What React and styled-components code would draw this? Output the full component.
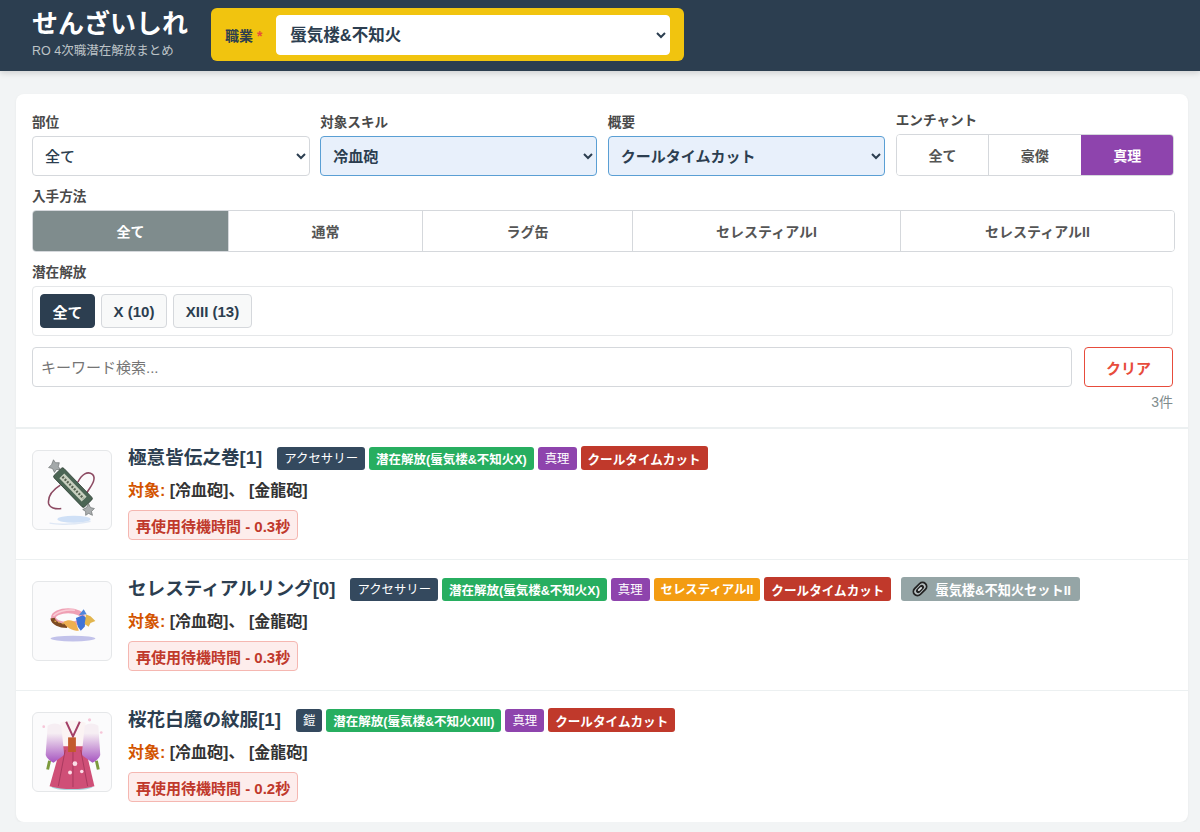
import React from 'react';
import styled, { createGlobalStyle } from 'styled-components';

const GlobalStyle = createGlobalStyle`
  * { box-sizing: border-box; }
  html, body { margin: 0; padding: 0; }
  body {
    background: #f2f4f5;
    color: #2c3e50;
    font-family: "Liberation Sans", "Noto Sans CJK JP", sans-serif;
  }
`;

const Header = styled.header`
  display: flex;
  align-items: center;
  gap: 23px;
  height: 71px;
  padding: 0 32px 2px;
  background: #2c3e50;
  box-shadow: 0 2px 6px rgba(0, 0, 0, 0.15);
`;

const Brand = styled.div`
  display: flex;
  flex-direction: column;
  gap: 6px;
  width: 156px;
`;

const Title = styled.h1`
  margin: 0;
  font-size: 26px;
  line-height: 28px;
  font-weight: 700;
  color: #fff;
  white-space: nowrap;
`;

const Subtitle = styled.div`
  font-size: 12.5px;
  line-height: 15px;
  color: #bdc3c7;
  white-space: nowrap;
`;

const JobBox = styled.div`
  display: flex;
  align-items: center;
  gap: 14px;
  width: 473px;
  height: 53px;
  padding: 0 14px;
  background: #f1c40f;
  border-radius: 6px;
`;

const JobLabel = styled.label`
  font-size: 14px;
  font-weight: 700;
  color: #2c3e50;
  white-space: nowrap;
`;

const Star = styled.span`
  color: #e74c3c;
`;

const Select = styled.select`
  display: block;
  width: 100%;
  height: 40px;
  padding: 0 8px;
  font: inherit;
  font-size: 15px;
  font-weight: ${({ $active }) => ($active ? 700 : 500)};
  color: #2c3e50;
  background-color: ${({ $active }) => ($active ? '#e8f0fb' : '#fff')};
  border: 1px solid ${({ $active }) => ($active ? '#5a9fd4' : '#d5d8dc')};
  border-radius: 4px;
`;

const JobSelect = styled(Select)`
  flex: 1;
  min-width: 0;
  padding: 0 9px;
  border-color: #fff;
  font-size: 16.5px;
  font-weight: 700;
`;

const Main = styled.main`
  margin: 23px 12px 0 16px;
  background: #fff;
  border-radius: 8px;
  box-shadow: 0 1px 3px rgba(0, 0, 0, 0.05);
`;

const Filters = styled.section`
  display: flex;
  flex-direction: column;
  padding: 18px 13px 16px 16px;
  border-bottom: 2px solid #ecf0f1;
`;

const TopRow = styled.div`
  display: grid;
  grid-template-columns: 277.5px 277px 277.3px 278.2px;
  gap: 10.67px;
  align-items: end;
`;

const Field = styled.div`
  display: flex;
  flex-direction: column;
  margin-top: ${({ $top }) => $top || 0}px;
`;

const FieldLabel = styled.div`
  font-size: 13.6px;
  line-height: 18px;
  font-weight: 700;
  color: #4a4a4a;
  margin-bottom: 4px;
`;

const Segmented = styled.div`
  display: flex;
  height: ${({ $h }) => $h}px;
  border: 1px solid #d5d8dc;
  border-radius: 4px;
  overflow: hidden;
`;

const Segment = styled.button`
  flex: ${({ $w }) => ($w ? `0 0 ${$w}px` : '1')};
  min-width: 0;
  padding: 0;
  border: 0;
  border-left: 1px solid ${({ $on }) => ($on ? 'transparent' : '#d5d8dc')};
  &:first-child { border-left: 0; }
  background: ${({ $on }) => $on || '#fff'};
  color: ${({ $on }) => ($on ? '#fff' : '#555')};
  font: inherit;
  font-size: 14px;
  font-weight: 700;
`;

const TierBox = styled.div`
  display: flex;
  gap: 6px;
  height: 50px;
  margin-right: 2px;
  padding: 7px;
  border: 1px solid #e5e7e9;
  border-radius: 4px;
`;

const TierButton = styled.button`
  height: 34px;
  width: ${({ $w }) => $w}px;
  padding: 0;
  font: inherit;
  font-size: 15px;
  font-weight: 700;
  color: ${({ $on }) => ($on ? '#fff' : '#2c3e50')};
  background: ${({ $on }) => ($on ? '#2c3e50' : '#f8f9f9')};
  border: 1px solid ${({ $on }) => ($on ? '#2c3e50' : '#d5d8dc')};
  border-radius: 4px;
`;

const SearchRow = styled.div`
  display: flex;
  gap: 12px;
  margin: 11px 2px 0 0;
`;

const SearchInput = styled.input`
  flex: 1;
  height: 40px;
  padding: 0 8px;
  font: inherit;
  font-size: 15px;
  color: #2c3e50;
  border: 1px solid #d5d8dc;
  border-radius: 4px;
  &::placeholder { color: #757575; }
`;

const ClearButton = styled.button`
  width: 89px;
  height: 40px;
  padding: 0;
  font: inherit;
  font-size: 15px;
  font-weight: 700;
  color: #e74c3c;
  background: #fff;
  border: 1px solid #e74c3c;
  border-radius: 4px;
`;

const Count = styled.div`
  margin: 6px 2px 0 0;
  text-align: right;
  font-size: 14px;
  line-height: 18px;
  color: #7f8c8d;
`;

const Item = styled.article`
  display: flex;
  gap: 16px;
  height: 131px;
  padding: 17px 16px 0;
  border-bottom: ${({ $last }) => ($last ? '0' : '1px solid #ecf0f1')};
`;

const Thumb = styled.div`
  flex: none;
  width: 80px;
  height: 80px;
  margin-top: 4px;
  display: flex;
  align-items: center;
  justify-content: center;
  background: #fbfbfc;
  border: 1px solid #e5e7e9;
  border-radius: 6px;
`;

const Body = styled.div`
  display: flex;
  flex-direction: column;
  align-items: flex-start;
`;

const TitleRow = styled.div`
  display: flex;
  align-items: center;
  gap: 4px;
  height: 24px;
`;

const ItemName = styled.h2`
  margin: 0 11px 0 0;
  font-size: 18.6px;
  line-height: 24px;
  font-weight: 700;
  color: #2c3e50;
  white-space: nowrap;
`;

const Badge = styled.span`
  display: inline-flex;
  align-items: center;
  height: 23px;
  padding: 0 7px;
  font-size: 12.4px;
  font-weight: ${({ $plain }) => ($plain ? 400 : 700)};
  color: #fff;
  background: ${({ $bg }) => $bg};
  border-radius: 3px;
  white-space: nowrap;
`;

const TierBadge = styled(Badge)`
  font-size: 12.5px;
`;

const SummaryBadge = styled(Badge)`
  height: 24px;
  font-size: 12.6px;
`;

const SetBadge = styled(Badge)`
  gap: 6px;
  height: 24px;
  margin-left: 6px;
  padding: 0 9px 0 10px;
  font-size: 13.2px;
  background: #95a5a6;
`;

const Target = styled.div`
  margin-top: 9px;
  font-size: 16px;
  line-height: 24px;
  font-weight: 700;
  color: #333;
`;

const TargetLabel = styled.span`
  color: #d35400;
`;

const Effect = styled.div`
  margin-top: 7px;
  padding: 0 7px;
  height: 30px;
  display: flex;
  align-items: center;
  font-size: 15px;
  font-weight: 700;
  color: #c0392b;
  background: #fdedec;
  border: 1px solid #f5b7b1;
  border-radius: 4px;
`;

const ScrollIcon = () => (
  <svg width="78" height="78" viewBox="0 0 80 80" fill="none">
    <ellipse cx="42" cy="70" rx="17" ry="3.5" fill="#cfe0f6" />
    <path d="M17 74c10 2 30 1 42-2" stroke="#dfe8f5" strokeWidth="1.5" />
    <path d="M46 32C50 24 56 20 61 24c4 4 0 10-4 16-3 5-6 9-10 12" stroke="#8c4a62" strokeWidth="1.6" />
    <path d="M28 35C20 40 15 47 16 54c1 4 7 6 13 5" stroke="#8c4a62" strokeWidth="1.6" />
    <path d="M21 9l2 3 4 0-1 4 2 3-4 0-2 3-2-4-4-1 3-3z" fill="#a4a9aa" stroke="#5d6263" strokeWidth="0.6" />
    <path d="M57 54l2 4 4 1-3 3 1 4-4-2-3 2 0-4-3-2 4-2z" fill="#a9adae" stroke="#5d6263" strokeWidth="0.6" />
    <g transform="rotate(-44 41 37.5)">
      <rect x="34" y="15" width="14" height="45" rx="2" fill="#4b6554" stroke="#2d3d33" strokeWidth="0.8" />
      <rect x="37.5" y="21" width="7" height="33" fill="#c9d0c0" />
      <path d="M41 22v31" stroke="#55604f" strokeWidth="2.4" strokeDasharray="2 1.4" />
    </g>
  </svg>
);

const RingIcon = () => (
  <svg width="78" height="78" viewBox="0 0 80 80" fill="none">
    <ellipse cx="41" cy="58" rx="23" ry="3" fill="#c2c2ea" />
    <ellipse cx="36" cy="36.5" rx="15" ry="7" stroke="#efa0b4" strokeWidth="5" />
    <path d="M21 35c3-4 12-7 22-6" stroke="#f9ccd6" strokeWidth="1.6" />
    <path d="M20 37c1 5 7 8 15 8" stroke="#7d4a22" strokeWidth="4.5" />
    <path d="M22 40l10 3" stroke="#d8a24a" strokeWidth="1.4" strokeDasharray="2 2" />
    <path d="M31 41c5-3 10-2 13 1l3 8c-7 0-13-3-16-9z" fill="#eeb050" />
    <path d="M44 37l7-3 4 3-2 9-4 4-3-4z" fill="#3f74d8" />
    <path d="M54 33l5 2 5 5-5 2-2 4-4-3 1-6z" fill="#e2b54e" />
    <path d="M47 34l5-6 3 5z" fill="#4f86dc" />
  </svg>
);

const RobeIcon = () => (
  <svg width="78" height="78" viewBox="0 0 80 80" fill="none">
    <defs>
      <linearGradient id="sleeve" x1="0" y1="0" x2="0" y2="1">
        <stop offset="0.25" stopColor="#f6eef3" />
        <stop offset="1" stopColor="#a654c0" />
      </linearGradient>
    </defs>
    <ellipse cx="40" cy="76" rx="21" ry="3" fill="#a9d5dc" />
    <path d="M29 33h24l10 42c-15 4-31 4-46 0z" fill="#cf4f77" />
    <path d="M28 10c8-3 18-3 26 0l-1 24H29z" fill="#fbf3f3" />
    <path d="M15 13c5-3 10-3 14 0l3 30-11 8c-4-2-7-5-8-8z" fill="url(#sleeve)" />
    <path d="M67 13c-5-3-10-3-14 0l-3 30 11 8c4-2 7-5 8-8z" fill="url(#sleeve)" />
    <path d="M34 9l7 15 7-15" stroke="#a33f66" strokeWidth="2" />
    <rect x="36" y="25" width="8" height="15" fill="#c25a2c" />
    <path d="M33 38l-7 37M41 40v36M49 38l7 37" stroke="#a83a5f" strokeWidth="1" />
    <circle cx="43" cy="52" r="2.4" fill="#fbdfe8" />
    <circle cx="38" cy="61" r="2" fill="#fbdfe8" />
    <circle cx="50" cy="60" r="1.8" fill="#fbdfe8" />
    <circle cx="11" cy="14" r="1.4" fill="#f6c6d8" />
    <circle cx="58" cy="7" r="1.6" fill="#f6c6d8" />
    <circle cx="70" cy="20" r="1.4" fill="#f6c6d8" />
    <path d="M17 49l-2 9M65 49l2 9" stroke="#7c9a3c" strokeWidth="3" />
  </svg>
);

const LinkIcon = () => (
  <svg width="18" height="18" viewBox="0 0 20 20" fill="none">
    <g transform="rotate(-45 10 10)">
      <rect x="0.5" y="4.5" width="19" height="11" rx="5.5" fill="#222" />
      <rect x="2.6" y="6.4" width="14.8" height="7.2" rx="3.6" fill="#b8c1c2" />
      <rect x="4.6" y="7.4" width="10.8" height="5.2" rx="2.6" fill="#222" />
      <rect x="7.2" y="9" width="5.6" height="2" rx="1" fill="#dfe4e5" />
    </g>
  </svg>
);

const items = [
  {
    name: '極意皆伝之巻[1]',
    icon: <ScrollIcon />,
    kind: 'アクセサリー',
    tier: '潜在解放(蜃気楼&不知火X)',
    effect: '再使用待機時間 - 0.3秒',
  },
  {
    name: 'セレスティアルリング[0]',
    icon: <RingIcon />,
    kind: 'アクセサリー',
    tier: '潜在解放(蜃気楼&不知火X)',
    source: 'セレスティアルII',
    set: '蜃気楼&不知火セットII',
    effect: '再使用待機時間 - 0.3秒',
  },
  {
    name: '桜花白魔の紋服[1]',
    icon: <RobeIcon />,
    kind: '鎧',
    tier: '潜在解放(蜃気楼&不知火XIII)',
    effect: '再使用待機時間 - 0.2秒',
  },
];

export default function App() {
  return (
    <>
      <GlobalStyle />
      <Header>
        <Brand>
          <Title>せんざいしれ</Title>
          <Subtitle>RO 4次職潜在解放まとめ</Subtitle>
        </Brand>
        <JobBox>
          <JobLabel>職業 <Star>*</Star></JobLabel>
          <JobSelect defaultValue="蜃気楼&不知火">
            <option>蜃気楼&不知火</option>
          </JobSelect>
        </JobBox>
      </Header>
      <Main>
        <Filters>
          <TopRow>
            <Field>
              <FieldLabel>部位</FieldLabel>
              <Select><option>全て</option></Select>
            </Field>
            <Field>
              <FieldLabel>対象スキル</FieldLabel>
              <Select $active><option>冷血砲</option></Select>
            </Field>
            <Field>
              <FieldLabel>概要</FieldLabel>
              <Select $active><option>クールタイムカット</option></Select>
            </Field>
            <Field>
              <FieldLabel>エンチャント</FieldLabel>
              <Segmented $h={42}>
                <Segment>全て</Segment>
                <Segment>豪傑</Segment>
                <Segment $on="#8e44ad">真理</Segment>
              </Segmented>
            </Field>
          </TopRow>
          <Field $top={12}>
            <FieldLabel>入手方法</FieldLabel>
            <Segmented $h={42}>
              <Segment $w={195} $on="#7f8c8d">全て</Segment>
              <Segment $w={194}>通常</Segment>
              <Segment $w={210}>ラグ缶</Segment>
              <Segment $w={268}>セレスティアルI</Segment>
              <Segment>セレスティアルII</Segment>
            </Segmented>
          </Field>
          <Field $top={12}>
            <FieldLabel>潜在解放</FieldLabel>
            <TierBox>
              <TierButton $on $w={55}>全て</TierButton>
              <TierButton $w={66}>X (10)</TierButton>
              <TierButton $w={79}>XIII (13)</TierButton>
            </TierBox>
          </Field>
          <SearchRow>
            <SearchInput placeholder="キーワード検索..." />
            <ClearButton>クリア</ClearButton>
          </SearchRow>
          <Count>3件</Count>
        </Filters>
        {items.map((item, i) => (
          <Item key={item.name} $last={i === items.length - 1}>
            <Thumb>{item.icon}</Thumb>
            <Body>
              <TitleRow>
                <ItemName>{item.name}</ItemName>
                <Badge $plain $bg="#34495e">{item.kind}</Badge>
                <TierBadge $bg="#27ae60">{item.tier}</TierBadge>
                <Badge $plain $bg="#8e44ad">真理</Badge>
                {item.source && <Badge $bg="#f39c12">{item.source}</Badge>}
                <SummaryBadge $bg="#c0392b">クールタイムカット</SummaryBadge>
                {item.set && <SetBadge><LinkIcon />{item.set}</SetBadge>}
              </TitleRow>
              <Target><TargetLabel>対象:</TargetLabel> [冷血砲]、 [金龍砲]</Target>
              <Effect>{item.effect}</Effect>
            </Body>
          </Item>
        ))}
      </Main>
    </>
  );
}
